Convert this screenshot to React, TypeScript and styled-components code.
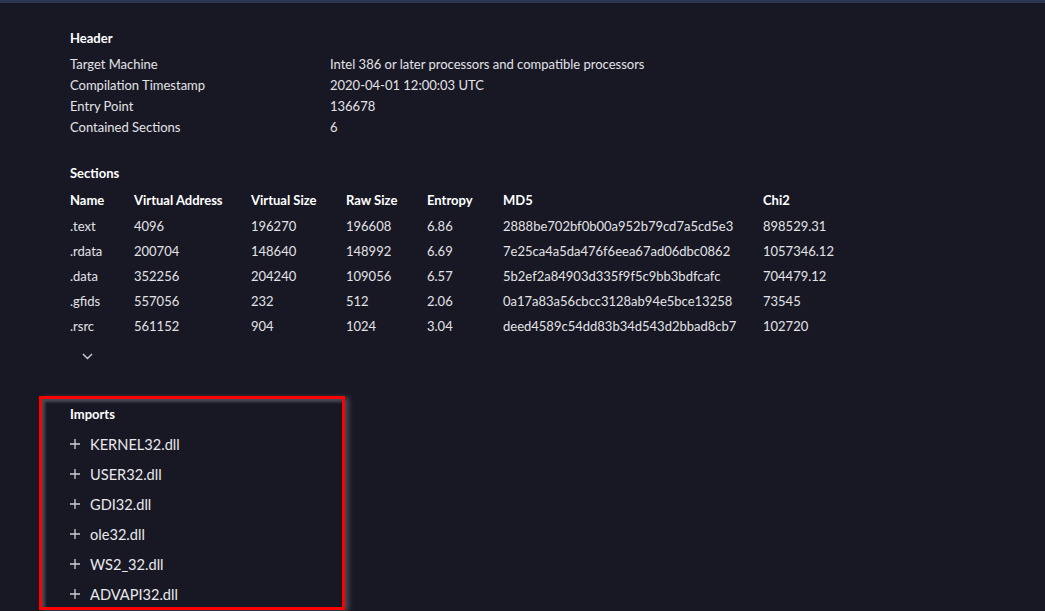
import React from "react";
import styled, { createGlobalStyle } from "styled-components";

const Global = createGlobalStyle`
  html, body { margin: 0; padding: 0; background: #181825; }
  body { font-family: "Lato", "Liberation Sans", sans-serif; font-size: 13px; color: #e3e3e6; }
  * { box-sizing: border-box; }
`;

const TopBar = styled.div`
  height: 3px;
  background: #2c3652;
`;

const Page = styled.main`
  padding: 25px 0 0 40px;
  height: 608px;
  overflow: hidden;
`;

const Section = styled.section<{ $mb: number }>`
  padding-left: 30px;
  margin-bottom: ${(p) => p.$mb}px;
`;

const Title = styled.h3`
  margin: 0;
  font-size: 13px;
  font-weight: 700;
  color: #ffffff;
  line-height: 21px;
`;

const KeyValueGrid = styled.div`
  display: grid;
  grid-template-columns: 260px auto;
  margin-top: 5px;
  line-height: 21px;
`;

const Table = styled.div`
  display: grid;
  grid-template-columns: 64px 117px 95px 81px 76px 260px auto;
  margin-top: 3px;
`;

const HeadCell = styled.div`
  font-weight: 700;
  color: #ffffff;
  line-height: 27px;
`;

const Cell = styled.div`
  line-height: 25px;
  white-space: nowrap;
`;

const ChevronRow = styled.div`
  height: 20px;
  display: flex;
  align-items: center;
  padding-left: 12px;
  margin-top: 7px;
`;

const ImportsBox = styled.section`
  width: 306px;
  height: 214px;
  border: 3px solid #ff0000;
  margin-left: -1px;
  padding: 5px 0 0 28px;
  box-shadow: 4px 1px 5px rgba(110, 110, 120, 0.55), inset 3px 3px 3px rgba(95, 95, 105, 0.7);
`;

const ImportList = styled.ul`
  list-style: none;
  margin: 0;
  padding: 0;
  margin-top: 4px;
`;

const ImportItem = styled.li`
  display: flex;
  align-items: center;
  height: 30px;
  gap: 10px;
  font-size: 14.6px;
  color: #e8e8ec;
`;

const Plus = () => (
  <svg width="10" height="10" viewBox="0 0 10 10">
    <path d="M5 0V10M0 5H10" stroke="#cfcfd4" strokeWidth="1.3" />
  </svg>
);

const Chevron = () => (
  <svg width="11" height="7" viewBox="0 0 11 7">
    <path d="M1 1L5.5 5.5L10 1" stroke="#d0d0d6" strokeWidth="1.4" fill="none" />
  </svg>
);

const header: [string, string][] = [
  ["Target Machine", "Intel 386 or later processors and compatible processors"],
  ["Compilation Timestamp", "2020-04-01 12:00:03 UTC"],
  ["Entry Point", "136678"],
  ["Contained Sections", "6"],
];

const cols = ["Name", "Virtual Address", "Virtual Size", "Raw Size", "Entropy", "MD5", "Chi2"];
const rows = [
  [".text", "4096", "196270", "196608", "6.86", "2888be702bf0b00a952b79cd7a5cd5e3", "898529.31"],
  [".rdata", "200704", "148640", "148992", "6.69", "7e25ca4a5da476f6eea67ad06dbc0862", "1057346.12"],
  [".data", "352256", "204240", "109056", "6.57", "5b2ef2a84903d335f9f5c9bb3bdfcafc", "704479.12"],
  [".gfids", "557056", "232", "512", "2.06", "0a17a83a56cbcc3128ab94e5bce13258", "73545"],
  [".rsrc", "561152", "904", "1024", "3.04", "deed4589c54dd83b34d543d2bbad8cb7", "102720"],
];

const imports = ["KERNEL32.dll", "USER32.dll", "GDI32.dll", "ole32.dll", "WS2_32.dll", "ADVAPI32.dll"];

export default function App() {
  return (
    <>
      <Global />
      <TopBar />
      <Page>
        <Section $mb={25}>
          <Title>Header</Title>
          <KeyValueGrid>
            {header.map(([k, v]) => (
              <React.Fragment key={k}>
                <div>{k}</div>
                <div>{v}</div>
              </React.Fragment>
            ))}
          </KeyValueGrid>
        </Section>
        <Section $mb={30}>
          <Title>Sections</Title>
          <Table>
            {cols.map((c) => (
              <HeadCell key={c}>{c}</HeadCell>
            ))}
            {rows.map((r) =>
              r.map((c, i) => <Cell key={r[0] + i}>{c}</Cell>)
            )}
          </Table>
          <ChevronRow>
            <Chevron />
          </ChevronRow>
        </Section>
        <ImportsBox>
          <Title>Imports</Title>
          <ImportList>
            {imports.map((m) => (
              <ImportItem key={m}>
                <Plus />
                <span>{m}</span>
              </ImportItem>
            ))}
          </ImportList>
        </ImportsBox>
      </Page>
    </>
  );
}
